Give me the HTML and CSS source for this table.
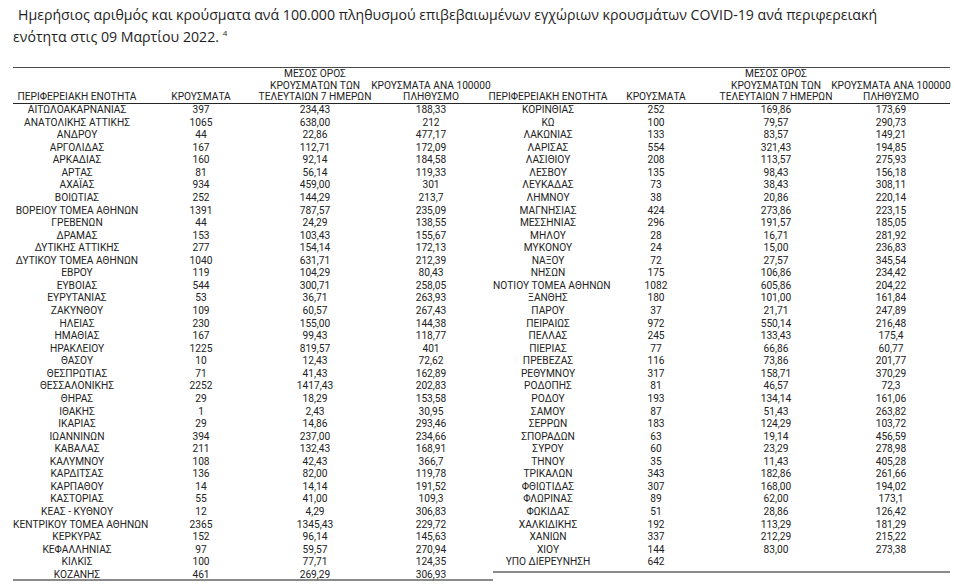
FILE: index.html
```html
<!DOCTYPE html>
<html lang="el">
<head>
<meta charset="utf-8">
<title>Κρούσματα COVID-19 ανά περιφερειακή ενότητα</title>
<link rel="stylesheet" href="styles.css">
</head>
<body>
<div class="page">
  <p class="title">Ημερήσιος αριθμός και κρούσματα ανά 100.000 πληθυσμού επιβεβαιωμένων εγχώριων κρουσμάτων COVID-19 ανά περιφερειακή<br>ενότητα στις 09 Μαρτίου 2022. <sup>4</sup></p>
  <div class="tables">
    <div class="tbl left">
      <div class="row head">
        <span class="h"><span>ΠΕΡΙΦΕΡΕΙΑΚΗ ΕΝΟΤΗΤΑ</span></span>
        <span class="h"><span>ΚΡΟΥΣΜΑΤΑ</span></span>
        <span class="h"><span>ΜΕΣΟΣ ΟΡΟΣ</span><span>ΚΡΟΥΣΜΑΤΩΝ ΤΩΝ</span><span>ΤΕΛΕΥΤΑΙΩΝ 7 ΗΜΕΡΩΝ</span></span>
        <span class="h"><span>ΚΡΟΥΣΜΑΤΑ ΑΝΑ 100000</span><span>ΠΛΗΘΥΣΜΟ</span></span>
      </div>
      <div class="row"><span>ΑΙΤΩΛΟΑΚΑΡΝΑΝΙΑΣ</span><span>397</span><span>234,43</span><span>188,33</span></div>
      <div class="row"><span>ΑΝΑΤΟΛΙΚΗΣ ΑΤΤΙΚΗΣ</span><span>1065</span><span>638,00</span><span>212</span></div>
      <div class="row"><span>ΑΝΔΡΟΥ</span><span>44</span><span>22,86</span><span>477,17</span></div>
      <div class="row"><span>ΑΡΓΟΛΙΔΑΣ</span><span>167</span><span>112,71</span><span>172,09</span></div>
      <div class="row"><span>ΑΡΚΑΔΙΑΣ</span><span>160</span><span>92,14</span><span>184,58</span></div>
      <div class="row"><span>ΑΡΤΑΣ</span><span>81</span><span>56,14</span><span>119,33</span></div>
      <div class="row"><span>ΑΧΑΪΑΣ</span><span>934</span><span>459,00</span><span>301</span></div>
      <div class="row"><span>ΒΟΙΩΤΙΑΣ</span><span>252</span><span>144,29</span><span>213,7</span></div>
      <div class="row"><span>ΒΟΡΕΙΟΥ ΤΟΜΕΑ ΑΘΗΝΩΝ</span><span>1391</span><span>787,57</span><span>235,09</span></div>
      <div class="row"><span>ΓΡΕΒΕΝΩΝ</span><span>44</span><span>24,29</span><span>138,55</span></div>
      <div class="row"><span>ΔΡΑΜΑΣ</span><span>153</span><span>103,43</span><span>155,67</span></div>
      <div class="row"><span>ΔΥΤΙΚΗΣ ΑΤΤΙΚΗΣ</span><span>277</span><span>154,14</span><span>172,13</span></div>
      <div class="row"><span>ΔΥΤΙΚΟΥ ΤΟΜΕΑ ΑΘΗΝΩΝ</span><span>1040</span><span>631,71</span><span>212,39</span></div>
      <div class="row"><span>ΕΒΡΟΥ</span><span>119</span><span>104,29</span><span>80,43</span></div>
      <div class="row"><span>ΕΥΒΟΙΑΣ</span><span>544</span><span>300,71</span><span>258,05</span></div>
      <div class="row"><span>ΕΥΡΥΤΑΝΙΑΣ</span><span>53</span><span>36,71</span><span>263,93</span></div>
      <div class="row"><span>ΖΑΚΥΝΘΟΥ</span><span>109</span><span>60,57</span><span>267,43</span></div>
      <div class="row"><span>ΗΛΕΙΑΣ</span><span>230</span><span>155,00</span><span>144,38</span></div>
      <div class="row"><span>ΗΜΑΘΙΑΣ</span><span>167</span><span>99,43</span><span>118,77</span></div>
      <div class="row"><span>ΗΡΑΚΛΕΙΟΥ</span><span>1225</span><span>819,57</span><span>401</span></div>
      <div class="row"><span>ΘΑΣΟΥ</span><span>10</span><span>12,43</span><span>72,62</span></div>
      <div class="row"><span>ΘΕΣΠΡΩΤΙΑΣ</span><span>71</span><span>41,43</span><span>162,89</span></div>
      <div class="row"><span>ΘΕΣΣΑΛΟΝΙΚΗΣ</span><span>2252</span><span>1417,43</span><span>202,83</span></div>
      <div class="row"><span>ΘΗΡΑΣ</span><span>29</span><span>18,29</span><span>153,58</span></div>
      <div class="row"><span>ΙΘΑΚΗΣ</span><span>1</span><span>2,43</span><span>30,95</span></div>
      <div class="row"><span>ΙΚΑΡΙΑΣ</span><span>29</span><span>14,86</span><span>293,46</span></div>
      <div class="row"><span>ΙΩΑΝΝΙΝΩΝ</span><span>394</span><span>237,00</span><span>234,66</span></div>
      <div class="row"><span>ΚΑΒΑΛΑΣ</span><span>211</span><span>132,43</span><span>168,91</span></div>
      <div class="row"><span>ΚΑΛΥΜΝΟΥ</span><span>108</span><span>42,43</span><span>366,7</span></div>
      <div class="row"><span>ΚΑΡΔΙΤΣΑΣ</span><span>136</span><span>82,00</span><span>119,78</span></div>
      <div class="row"><span>ΚΑΡΠΑΘΟΥ</span><span>14</span><span>14,14</span><span>191,52</span></div>
      <div class="row"><span>ΚΑΣΤΟΡΙΑΣ</span><span>55</span><span>41,00</span><span>109,3</span></div>
      <div class="row"><span>ΚΕΑΣ - ΚΥΘΝΟΥ</span><span>12</span><span>4,29</span><span>306,83</span></div>
      <div class="row"><span>ΚΕΝΤΡΙΚΟΥ ΤΟΜΕΑ ΑΘΗΝΩΝ</span><span>2365</span><span>1345,43</span><span>229,72</span></div>
      <div class="row"><span>ΚΕΡΚΥΡΑΣ</span><span>152</span><span>96,14</span><span>145,63</span></div>
      <div class="row"><span>ΚΕΦΑΛΛΗΝΙΑΣ</span><span>97</span><span>59,57</span><span>270,94</span></div>
      <div class="row"><span>ΚΙΛΚΙΣ</span><span>100</span><span>77,71</span><span>124,35</span></div>
      <div class="row"><span>ΚΟΖΑΝΗΣ</span><span>461</span><span>269,29</span><span>306,93</span></div>
    </div>
    <div class="tbl right">
      <div class="row head">
        <span class="h"><span>ΠΕΡΙΦΕΡΕΙΑΚΗ ΕΝΟΤΗΤΑ</span></span>
        <span class="h"><span>ΚΡΟΥΣΜΑΤΑ</span></span>
        <span class="h"><span>ΜΕΣΟΣ ΟΡΟΣ</span><span>ΚΡΟΥΣΜΑΤΩΝ ΤΩΝ</span><span>ΤΕΛΕΥΤΑΙΩΝ 7 ΗΜΕΡΩΝ</span></span>
        <span class="h"><span>ΚΡΟΥΣΜΑΤΑ ΑΝΑ 100000</span><span>ΠΛΗΘΥΣΜΟ</span></span>
      </div>
      <div class="row"><span>ΚΟΡΙΝΘΙΑΣ</span><span>252</span><span>169,86</span><span>173,69</span></div>
      <div class="row"><span>ΚΩ</span><span>100</span><span>79,57</span><span>290,73</span></div>
      <div class="row"><span>ΛΑΚΩΝΙΑΣ</span><span>133</span><span>83,57</span><span>149,21</span></div>
      <div class="row"><span>ΛΑΡΙΣΑΣ</span><span>554</span><span>321,43</span><span>194,85</span></div>
      <div class="row"><span>ΛΑΣΙΘΙΟΥ</span><span>208</span><span>113,57</span><span>275,93</span></div>
      <div class="row"><span>ΛΕΣΒΟΥ</span><span>135</span><span>98,43</span><span>156,18</span></div>
      <div class="row"><span>ΛΕΥΚΑΔΑΣ</span><span>73</span><span>38,43</span><span>308,11</span></div>
      <div class="row"><span>ΛΗΜΝΟΥ</span><span>38</span><span>20,86</span><span>220,14</span></div>
      <div class="row"><span>ΜΑΓΝΗΣΙΑΣ</span><span>424</span><span>273,86</span><span>223,15</span></div>
      <div class="row"><span>ΜΕΣΣΗΝΙΑΣ</span><span>296</span><span>191,57</span><span>185,05</span></div>
      <div class="row"><span>ΜΗΛΟΥ</span><span>28</span><span>16,71</span><span>281,92</span></div>
      <div class="row"><span>ΜΥΚΟΝΟΥ</span><span>24</span><span>15,00</span><span>236,83</span></div>
      <div class="row"><span>ΝΑΞΟΥ</span><span>72</span><span>27,57</span><span>345,54</span></div>
      <div class="row"><span>ΝΗΣΩΝ</span><span>175</span><span>106,86</span><span>234,42</span></div>
      <div class="row"><span>ΝΟΤΙΟΥ ΤΟΜΕΑ ΑΘΗΝΩΝ</span><span>1082</span><span>605,86</span><span>204,22</span></div>
      <div class="row"><span>ΞΑΝΘΗΣ</span><span>180</span><span>101,00</span><span>161,84</span></div>
      <div class="row"><span>ΠΑΡΟΥ</span><span>37</span><span>21,71</span><span>247,89</span></div>
      <div class="row"><span>ΠΕΙΡΑΙΩΣ</span><span>972</span><span>550,14</span><span>216,48</span></div>
      <div class="row"><span>ΠΕΛΛΑΣ</span><span>245</span><span>133,43</span><span>175,4</span></div>
      <div class="row"><span>ΠΙΕΡΙΑΣ</span><span>77</span><span>66,86</span><span>60,77</span></div>
      <div class="row"><span>ΠΡΕΒΕΖΑΣ</span><span>116</span><span>73,86</span><span>201,77</span></div>
      <div class="row"><span>ΡΕΘΥΜΝΟΥ</span><span>317</span><span>158,71</span><span>370,29</span></div>
      <div class="row"><span>ΡΟΔΟΠΗΣ</span><span>81</span><span>46,57</span><span>72,3</span></div>
      <div class="row"><span>ΡΟΔΟΥ</span><span>193</span><span>134,14</span><span>161,06</span></div>
      <div class="row"><span>ΣΑΜΟΥ</span><span>87</span><span>51,43</span><span>263,82</span></div>
      <div class="row"><span>ΣΕΡΡΩΝ</span><span>183</span><span>124,29</span><span>103,72</span></div>
      <div class="row"><span>ΣΠΟΡΑΔΩΝ</span><span>63</span><span>19,14</span><span>456,59</span></div>
      <div class="row"><span>ΣΥΡΟΥ</span><span>60</span><span>23,29</span><span>278,98</span></div>
      <div class="row"><span>ΤΗΝΟΥ</span><span>35</span><span>11,43</span><span>405,28</span></div>
      <div class="row"><span>ΤΡΙΚΑΛΩΝ</span><span>343</span><span>182,86</span><span>261,66</span></div>
      <div class="row"><span>ΦΘΙΩΤΙΔΑΣ</span><span>307</span><span>168,00</span><span>194,02</span></div>
      <div class="row"><span>ΦΛΩΡΙΝΑΣ</span><span>89</span><span>62,00</span><span>173,1</span></div>
      <div class="row"><span>ΦΩΚΙΔΑΣ</span><span>51</span><span>28,86</span><span>126,42</span></div>
      <div class="row"><span>ΧΑΛΚΙΔΙΚΗΣ</span><span>192</span><span>113,29</span><span>181,29</span></div>
      <div class="row"><span>ΧΑΝΙΩΝ</span><span>337</span><span>212,29</span><span>215,22</span></div>
      <div class="row"><span>ΧΙΟΥ</span><span>144</span><span>83,00</span><span>273,38</span></div>
      <div class="row"><span>ΥΠΟ ΔΙΕΡΕΥΝΗΣΗ</span><span>642</span><span></span><span></span></div>
    </div>
  </div>
</div>
</body>
</html>
```
FILE: styles.css
```css
html, body {
  margin: 0;
  padding: 0;
  background: #ffffff;
}

.page {
  padding-left: 13px;
}

.title {
  margin: 0;
  padding-top: 4px;
  font-family: "Open Sans", "Noto Sans", sans-serif;
  font-size: 14.15px;
  line-height: 21.5px;
  color: #1e1e1e;
  text-indent: 5px;
  white-space: nowrap;
}

.title sup {
  font-size: 8px;
  vertical-align: 6px;
  line-height: 0;
}

.tables {
  display: flex;
  align-items: flex-start;
  width: 937px;
  margin-top: 20px;
  border-top: 1px solid #4a4a4a;
}

.tbl {
  font-family: "Roboto", "Liberation Sans", sans-serif;
  font-size: 10.2px;
  color: #222222;
  border-bottom: 2px solid #8a8a8a;
}

.left {
  --cols: 128px 120px 108px 124px;
}

.right {
  --cols: 110px 106px 134px 96px 11px;
  padding-bottom: 2.6px;
}

.row {
  display: grid;
  grid-template-columns: var(--cols);
  height: 12.57px;
  line-height: 12.57px;
  text-align: center;
  white-space: nowrap;
}

.left .row:last-child {
  height: 10.6px;
}

.row.head {
  height: 35px;
  line-height: 11.6px;
  border-bottom: 1px solid #262626;
  align-items: end;
}

.h {
  display: flex;
  flex-direction: column;
  align-items: center;
  justify-content: flex-end;
}
```
